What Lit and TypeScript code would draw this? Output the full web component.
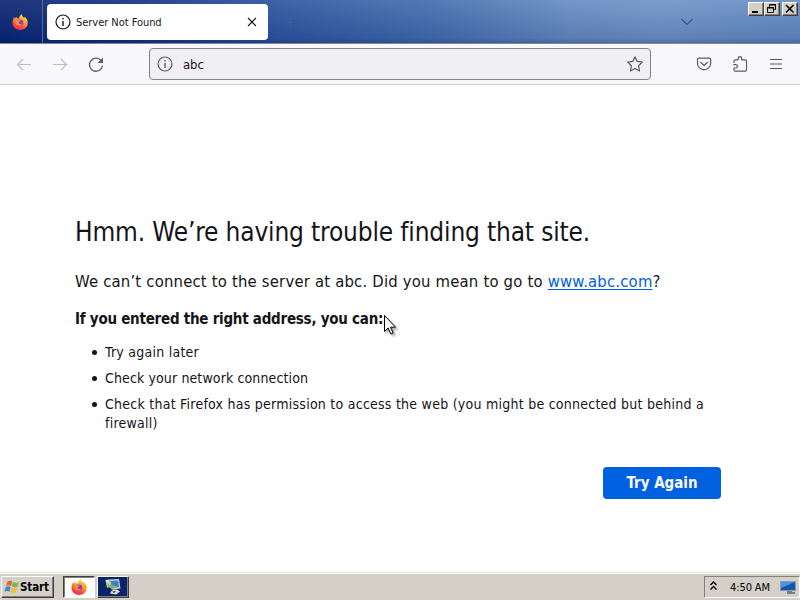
import { LitElement, html, css, svg } from "lit";
import { customElement } from "lit/decorators.js";

const fox = svg`
  <defs>
    <linearGradient id="flame" x1="0.8" y1="0" x2="0.3" y2="1">
      <stop offset="0" stop-color="#ffe14a"/><stop offset="0.45" stop-color="#ff9a2a"/>
      <stop offset="0.75" stop-color="#ff4a3c"/><stop offset="1" stop-color="#e8246c"/>
    </linearGradient>
  </defs>
  <path fill="url(#flame)" d="M1.6 4.2 2.4 3l.5 1.5L4.6 3 5 4.2l2 .3C7.300 2.500 8.300 1 9.800 0c0 2 1.200 2.600 2.200 4l.8-1.200c1.800 1.600 3 3.600 3 6A7.400 7.200 0 0 1 8.300 16C4 16 .5 13 .5 8.800c0-1.800.4-3.300 1.100-4.600z"/>
  <circle cx="8" cy="8.800" r="3.300" fill="#8a3fc4"/>
  <path fill="#ff8a2b" d="M2.800 5.600c1.200-.6 2.700-.5 3.800.5l2 .4c-.2 1-1.600 1.200-2 2 .2 1.500 1.800 2 3.600 1.200C9.500 12.200 4.300 12.600 3.200 9z"/>`;

const info = html`<svg class="info" width="16" height="16" viewBox="0 0 16 16" fill="none" stroke="currentColor">
  <circle cx="8" cy="8" r="7" stroke-width="1.200"/>
  <path d="M8 7v5M8 4v1.500" stroke-width="1.400"/></svg>`;

@customElement("app-root")
export class AppRoot extends LitElement {
  static styles = css`
    :host { display: flex; flex-direction: column; width: 800px; height: 600px; position: relative; overflow: hidden;
      background: #fff; color: #15141a; font-family: "DejaVu Sans Condensed", "DejaVu Sans", sans-serif; font-stretch: condensed; }
    * { box-sizing: border-box; }
    svg { display: block; flex: none; }
    span, h1, p, li, button { white-space: nowrap; }
    .tabs { height: 44px; flex: none; display: flex; align-items: flex-start; border-bottom: 1px solid #7c8899;
      background: linear-gradient(180deg, rgba(255,255,255,.08), rgba(0,15,90,.14) 90%, rgba(0,10,60,.28)),
        linear-gradient(90deg, #0b2672 0, #16347f 130px, #3057a0 280px, #456fae 430px, #688dc2 570px, #7195c8 660px, #658dc3 800px); }
    .home { width: 43px; height: 43px; border-right: 1px solid #516aa0; padding: 14px 0 0 12px; flex: none; }
    .tab { width: 221px; height: 36px; margin: 4px 0 0 4px; padding: 0 10px 0 8px; background: #fff; border-radius: 4px;
      display: flex; align-items: center; font-size: 11px; color: #15141a; }
    .tab .title { margin: 1px 0 0 5px; flex: 1; letter-spacing: -0.04px; }
    .plus { margin: 14px 0 0 14px; color: #46659c; opacity: .65; }
    .chev { margin: 14px 0 0 382px; color: #32549c; }
    .win { margin: 2px 0 0 auto; display: flex; padding-right: 2px; color: #000; }
    .wb { width: 16px; height: 14px; background: #d4d0c8; border: 1px solid; border-color: #fff #404040 #404040 #fff;
      box-shadow: inset -1px -1px #808080; }
    .wb.last { margin-left: 2px; }
    .nav { height: 41px; flex: none; display: flex; align-items: center; background: #f9f9fb; border-bottom: 1px solid #ccccd0; color: #5b5b66; padding-left: 16px; }
    .nav .off { color: #bdbdc2; }
    .nav .g { margin-left: 20px; }
    .url { width: 502px; height: 32px; margin-left: 45px; border: 1px solid #85858c; border-radius: 4px; background: #f0f0f4; display: flex;
      align-items: center; padding: 0 7px; }
    .url .text { flex: 1; margin-left: 10px; font-size: 13px; color: #15141a; letter-spacing: -0.1px; }
    .tools { display: flex; gap: 20px; margin-left: 45px; }
    .page { flex: 1; padding: 131px 0 0 75px; }
    h1 { margin: 0; font-size: 26px; line-height: 32px; font-weight: 400; letter-spacing: -0.16px; }
    p { margin: 0; }
    .lead { margin-top: 22px; font-size: 16.500px; line-height: 24px; letter-spacing: 0.2px; }
    a { color: #0060df; text-decoration: underline; text-underline-offset: 2px; text-decoration-thickness: 1px; }
    .can { margin-top: 15px; font-size: 15px; line-height: 20px; font-weight: 700; letter-spacing: -0.25px; }
    ul { margin: 14px 0 0; padding: 0 0 0 30px; font-size: 14px; line-height: 19px; list-style: none; letter-spacing: 0.25px; }
    li { margin-bottom: 7px; position: relative; }
    li:nth-child(2) { letter-spacing: 0.12px; }
    li::before { content: ""; position: absolute; left: -13px; top: 7px; width: 5px; height: 5px; border-radius: 50%; background: #15141a; }
    .again { display: block; width: 118px; height: 32px; margin: 34px 0 0 528px; padding: 0; border: 0; border-radius: 4px; background: #0061e0; color: #fbfbfe;
      font: 700 15px "DejaVu Sans Condensed", "DejaVu Sans", sans-serif; font-stretch: condensed; }
    .cursor { position: absolute; left: 383px; top: 314px; filter: drop-shadow(2px 2px 1px rgba(0,0,0,.35)); }
    .bar { height: 28px; flex: none; background: #d4d0c8; border-top: 1px solid #dfddd8; box-shadow: inset 0 1px #fff; display: flex; align-items: flex-start; padding: 3px 0 0 1px; color: #000; }
    .btn { height: 22px; display: flex; align-items: center; border: 1px solid; border-color: #fff #404040 #404040 #fff; box-shadow: inset -1px -1px #808080; }
    .start { width: 53px; padding-left: 2px; font-size: 11.500px; font-weight: 700; letter-spacing: -0.1px; }
    .task { width: 32px; justify-content: center; }
    .task.on { margin-left: 9px; background: #fff; border-color: #404040 #fff #fff #404040; box-shadow: inset 1px 1px #808080; }
    .task.blue { margin-left: 2px; background: #0a246a; }
    .tray { margin-left: auto; width: 96px; height: 22px; border: 1px solid; border-color: #808080 #fff #fff #808080; display: flex; align-items: center; padding-left: 4px; font-size: 11px; }
    .tray .time { margin-left: 12px; width: 42px; letter-spacing: -0.1px; }
    .tray .screen { margin-left: 8px; }
  `;

  render() {
    return html`
      <div class="tabs">
        <div class="home"><svg width="16" height="16" viewBox="0 0 16 16">${fox}</svg></div>
        <div class="tab">${info}<span class="title">Server Not Found</span>
          <svg width="12" height="12" viewBox="0 0 12 12" stroke="#15141a" stroke-width="1.100"><path d="M2 2l8 8M10 2l-8 8"/></svg>
        </div>
        <svg class="plus" width="16" height="16" viewBox="0 0 16 16" stroke="currentColor"><path d="M8 3v11M5 8.500h6"/></svg>
        <svg class="chev" width="14" height="14" viewBox="0 0 14 14" fill="none" stroke="currentColor" stroke-width="1.200"><path d="M1.500 5 7 10.500 12.500 5"/></svg>
        <div class="win">
          <div class="wb"><svg width="14" height="12"><path d="M3 8h6v2H3z"/></svg></div>
          <div class="wb"><svg width="14" height="12" fill="none" stroke="#000"><path d="M4.500 4V1.500h6v5H9M4 2h7M2.500 4.500h6v5h-6zM2 5h7"/></svg></div>
          <div class="wb last"><svg width="14" height="12" stroke="#000" stroke-width="1.600"><path d="M3 2l7.500 7.500M10.500 2 3 9.500"/></svg></div>
        </div>
      </div>
      <div class="nav">
        <svg class="off" width="16" height="16" viewBox="0 0 16 16" fill="none" stroke="currentColor" stroke-width="1.200"><path d="M15 8.500H1.500M7 3 1.500 8.500 7 14"/></svg>
        <svg class="off g" width="16" height="16" viewBox="0 0 16 16" fill="none" stroke="currentColor" stroke-width="1.200"><path d="M1 8.500h13.500M9 3 14.500 8.500 9 14"/></svg>
        <svg class="g" width="16" height="16" viewBox="0 0 16 16" fill="none" stroke="currentColor" stroke-width="1.300"><path d="M13 4.500a6.500 6.500 0 1 0 1.500 5"/><path d="M15 1.500V7H9.500z" fill="currentColor" stroke="none"/></svg>
        <div class="url">${info}<span class="text">abc</span>
          <svg width="16" height="16" viewBox="0 0 16 16" fill="none" stroke="currentColor" stroke-width="1.200" stroke-linejoin="round"><path d="M8 .8 10.200 5.400l5.100.7-3.700 3.600.9 5.200L8 12.400l-4.500 2.500.9-5.200L.7 6.100l5.100-.7z"/></svg>
        </div>
        <div class="tools">
          <svg width="16" height="16" viewBox="0 0 16 16" fill="none" stroke="currentColor" stroke-width="1.200" stroke-linecap="round" stroke-linejoin="round"><path d="M3 2.200h10.200c.9 0 1.500.6 1.500 1.500v3.500a6.600 6.600 0 0 1-13.200 0V3.700c0-.9.6-1.500 1.500-1.500z"/><path d="M4.700 6.300 8.100 9.500l3.400-3.200"/></svg>
          <svg width="16" height="16" viewBox="0 0 16 16" fill="none" stroke="currentColor" stroke-width="1.200" stroke-linejoin="round"><path d="M2 7V5q0-1.200 1.200-1.200h2.900V2.500a1.800 1.800 0 0 1 3.600 0v1.300h3.600q1.200 0 1.200 1.200v9q0 1.200-1.200 1.200H3.200Q2 15.200 2 14v-2h1.700a1.600 1.600 0 0 0 0-3.400H1.200"/></svg>
          <svg width="16" height="16" viewBox="0 0 16 16" stroke="currentColor" stroke-width="1.200"><path d="M2 3.500h12M2 8h12M2 12.500h12"/></svg>
        </div>
      </div>
      <div class="page">
        <h1><span>Hmm. We’re having trouble finding that site.</span></h1>
        <p class="lead"><span>We can’t connect to the server at abc. Did you mean to go to <a>www.abc.com</a>?</span></p>
        <p class="can"><span>If you entered the right address, you can:</span></p>
        <ul>
          <li>Try again later</li>
          <li>Check your network connection</li>
          <li>Check that Firefox has permission to access the web (you might be connected but behind a<br>firewall)</li>
        </ul>
        <button class="again">Try Again</button>
      </div>
      <svg class="cursor" width="14" height="22" viewBox="0 0 14 22"><path fill="#fff" stroke="#000" d="M1.500 1.500v16l3.700-3.500 2.600 6 2.400-1-2.600-5.800h4.900z"/></svg>
      <div class="bar">
        <div class="btn start"><svg width="16" height="16" viewBox="0 0 16 16">
          <path fill="#e8622c" d="M3.500 2.500Q6 .8 8.300 2.500L7 7.200Q4.800 5.600 2 7z"/><path fill="#7db94a" d="M9 3q2.800 1.500 6 .2l-1.500 4.600q-3 1.300-5.700-.2z"/>
          <path fill="#4486d3" d="M1.700 8q2.800-1.500 5 .2l-1.300 4.600Q3 11.200.3 12.800z"/><path fill="#f3be3e" d="M7.500 8.600q2.800 1.500 5.700.2l-1.400 4.700q-2.800 1.200-5.600-.3z"/></svg><span>Start</span></div>
        <div class="btn task on"><svg width="16" height="16" viewBox="0 0 16 16">${fox}</svg></div>
        <div class="btn task blue"><svg width="18" height="18" viewBox="0 0 18 18">
          <path fill="#c3cfd0" d="M5 1.500 15 1l1.500 9.500-9 1z"/><path fill="#3f82c4" d="M6.500 3 14 2.500l1 6.500-7 .7z"/><path fill="#d9e6b8" d="M1.500 2 5 1.500 7 9 3 9.500z"/>
          <path fill="#86b45a" d="M3 4l3 3 6 1-3 3-5-2z"/><path fill="#dddccb" d="M9 11.500h4l3 2-4 3-6-1 1-2z"/><path fill="#273e62" d="M8 13.500l4-.5-2 2z"/></svg></div>
        <div class="tray"><svg width="9" height="12" viewBox="0 0 9 12" fill="none" stroke="#000" stroke-width="1.300"><path d="M1.500 4 4.500 1l3 3M1.500 8.500l3-3 3 3"/></svg>
          <span class="time">4:50 AM</span>
          <svg class="screen" width="16" height="16" viewBox="0 0 16 16"><path fill="#8b9aa8" d="M0 2h16v10H0z"/><path fill="#1556ad" d="M1 3h14v8H1z"/><path fill="#4e91dc" d="M1 3h14L1 9z"/><path fill="#71818c" d="M7 12h5v1h3v2H7z"/></svg>
        </div>
      </div>`;
  }
}
